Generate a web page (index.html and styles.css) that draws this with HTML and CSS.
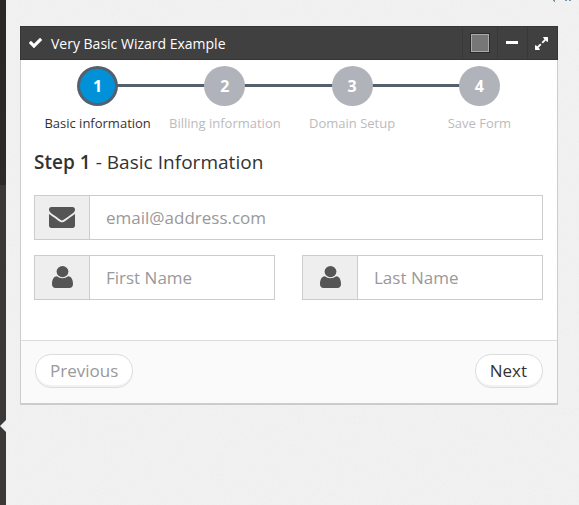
FILE: index.html
```html
<!DOCTYPE html>
<html lang="en">
<head>
<meta charset="utf-8">
<title>Wizard</title>
<link rel="stylesheet" href="styles.css">
</head>
<body>
<svg width="0" height="0" class="defs">
  <symbol id="user" viewBox="0 0 21 22"><ellipse cx="10.500" cy="5.600" rx="5.900" ry="5.600"/><path d="M4.800 10.200q2.500 2 5.700 2t5.700-2C19.600 10.400 21 14 21 18.200 21 20.600 19.600 22 17.400 22H3.600C1.400 22 0 20.600 0 18.200 0 14 1.400 10.400 4.800 10.200z"/></symbol>
</svg>
<div class="page">
  <aside class="sidebar"><span class="notch"></span></aside>
  <main class="content">
    <svg class="grain" width="573" height="505"><filter id="noise"><feTurbulence type="fractalNoise" baseFrequency="0.6" numOctaves="2" seed="4"/><feColorMatrix type="saturate" values="0"/></filter><rect width="573" height="505" filter="url(#noise)"/></svg>
    <svg class="spark" width="24" height="3" viewBox="0 0 24 3"><path d="M1 0h2v2h-1v-1h-1zM13 0h2v1h-2zM17 0h2v1h-2z"/></svg>
    <section class="widget">
      <header class="bar">
        <svg class="check" viewBox="121 334 1550 1188"><path d="M1671 566q0 40-28 68l-724 724-136 136q-28 28-68 28t-68-28l-136-136-362-362q-28-28-28-68t28-68l136-136q28-28 68-28t68 28l294 295 656-657q28-28 68-28t68 28l136 136q28 28 28 68z"/></svg>
        <h2>Very Basic Wizard Example</h2>
        <span class="tool color"><i class="swatch"></i></span>
        <span class="tool"><i class="minus"></i></span>
        <span class="tool last"><svg class="expand" viewBox="128 128 1536 1536"><path d="M883 1056q0 13-10 23l-332 332 144 144q19 19 19 45t-19 45-45 19h-448q-26 0-45-19t-19-45v-448q0-26 19-45t45-19 45 19l144 144 332-332q10-10 23-10t23 10l114 114q10 10 10 23zm781-864v448q0 26-19 45t-45 19-45-19l-144-144-332 332q-10 10-23 10t-23-10l-114-114q-10-10-10-23t10-23l332-332-144-144q-19-19-19-45t19-45 45-19h448q26 0 45 19t19 45z"/></svg></span>
      </header>
      <div class="body">
        <ol class="steps">
          <li class="active"><b>1</b><span>Basic information</span></li>
          <li><b>2</b><span>Billing information</span></li>
          <li><b>3</b><span>Domain Setup</span></li>
          <li><b>4</b><span>Save Form</span></li>
        </ol>
        <h3><strong>Step 1</strong> - Basic Information</h3>
        <div class="field">
          <span class="addon"><svg class="mail" viewBox="0 256 1792 1408" preserveAspectRatio="none"><path d="M1792 710v794q0 66-47 113t-113 47h-1472q-66 0-113-47t-47-113v-794q44 49 101 87 362 246 497 345 57 42 92.500 65.500t94.500 48 110 24.500h2q51 0 110-24.500t94.500-48 92.500-65.500q170-123 498-345 57-39 100-87zm0-294q0 79-49 151t-122 123q-376 261-468 325-10 7-42.500 31t-54 38.500-52 32.500-57.500 27-50 9h-2q-23 0-50-9t-57.500-27-52-32.500-54-38.500-42.500-31q-91-64-262-182.500t-205-142.500q-62-42-117-115.500t-55-136.500q0-78 41.500-130t118.500-52h1472q65 0 112.500 47t47.500 113z"/></svg></span>
          <input type="text" placeholder="email@address.com">
        </div>
        <div class="row">
          <div class="field"><span class="addon"><svg class="user"><use href="#user"/></svg></span><input type="text" placeholder="First Name"></div>
          <div class="field"><span class="addon"><svg class="user"><use href="#user"/></svg></span><input type="text" placeholder="Last Name"></div>
        </div>
      </div>
      <footer><a class="btn prev">Previous</a><a class="btn next">Next</a></footer>
    </section>
  </main>
</div>
</body>
</html>
```
FILE: styles.css
```css
* { box-sizing: border-box; }
body { margin: 0; font-family: "Open Sans", sans-serif; color: #333; overflow: hidden; }
.defs { position: absolute; }
.page { display: flex; height: 505px; }
.sidebar { position: relative; flex: none; width: 6px; background: linear-gradient(#2b2724 0, #2e2a27 185px, #3b3937 185px, #3b3937 100%); }
.notch { position: absolute; right: 0; top: 420px; border: 6px solid transparent; border-left: 0; border-right-color: #efefef; }
.content { position: relative; flex: 1; min-width: 0; padding: 26px 21px 0 14px; background: #f2f2f2; overflow: hidden; }
.grain { position: absolute; left: 0; top: 0; opacity: .06; }
.spark { position: absolute; left: 546px; top: 0; fill: #7594a5; }
.widget { position: relative; height: 379px; display: flex; flex-direction: column; }
.bar { display: flex; align-items: center; height: 34px; padding-left: 8px; background: #404040; border: 1px solid #363636; color: #fff; }
.bar svg { fill: #fff; }
.check { width: 13px; height: 10px; }
h2 { flex: 1; margin: 2px 0 0 9px; font-size: 14px; font-weight: 400; line-height: 32px; }
.tool { display: flex; align-items: center; justify-content: center; width: 30px; height: 32px; padding-right: 1px; border-left: 1px solid #383838; }
.color { width: 35px; padding-right: 0; }
.swatch { width: 20px; height: 20px; background: #777; border: 1px solid #2a2a2a; box-shadow: inset 0 0 0 1px #aaa; }
.minus { width: 12px; height: 3px; background: #fff; margin: -1px 1px 0 0; }
.expand { width: 13px; height: 13px; margin-right: 1px; }
.body { height: 280px; padding: 6px 14px 0 13px; background: #fff; border: solid #ccc; border-width: 0 1px; }
.steps { display: flex; margin: 0; padding: 0; list-style: none; }
.steps li { flex: 1 1 0; min-width: 0; display: flex; flex-direction: column; align-items: center; color: #bbb; font-size: 13px; line-height: 18px; white-space: nowrap; background: linear-gradient(#55606e, #55606e) 0 18px / 100% 3px no-repeat; }
.steps li:first-child { background-position: 100% 18px; background-size: 50% 3px; }
.steps li:last-child { background-size: 50% 3px; }
.steps b { width: 41px; height: 40px; border-radius: 50%; background: #b0b4ba; color: #fff; font-size: 16px; line-height: 41px; text-align: center; }
.steps span { margin-top: 8px; }
.steps .active { color: #333; }
.steps .active b { background: #0091d9; border: 3px solid #55606e; line-height: 35px; }
h3 { margin: 16px 0 18px; font-size: 19px; line-height: 29px; font-weight: 400; height: 29px; letter-spacing: .03px; }
h3 strong { font-weight: 600; }
.field { display: flex; height: 45px; border: 1px solid #ccc; background: #fff; }
.row { display: flex; gap: 27px; margin-top: 15px; }
.row .field { flex: 1 1 0; min-width: 0; }
.addon { flex: none; width: 55px; display: flex; align-items: center; justify-content: center; background: #eee; border-right: 1px solid #ccc; }
.addon svg { fill: #555; }
.mail { width: 26px; height: 21px; }
.user { width: 21px; height: 22px; margin-top: -1px; }
input { flex: 1; width: 0; min-width: 0; border: 0; padding: 0 16px; background: transparent; font: 17px "Open Sans", sans-serif; color: #555; outline: 0; }
input::placeholder { color: #999; }
footer { display: flex; justify-content: space-between; height: 65px; padding: 13px 14px 0; background: #fafafa; border: 1px solid #ccc; border-top-color: #ddd; border-bottom-width: 2px; }
.btn { height: 34px; padding: 0 14px; border: 1px solid #ddd; border-radius: 16px; box-shadow: inset 0 -2px 0 rgba(0,0,0,.05); background: #fff; font-size: 17px; line-height: 32px; color: #333; }
.prev { color: #999; }
.next { padding-right: 15px; }
```
